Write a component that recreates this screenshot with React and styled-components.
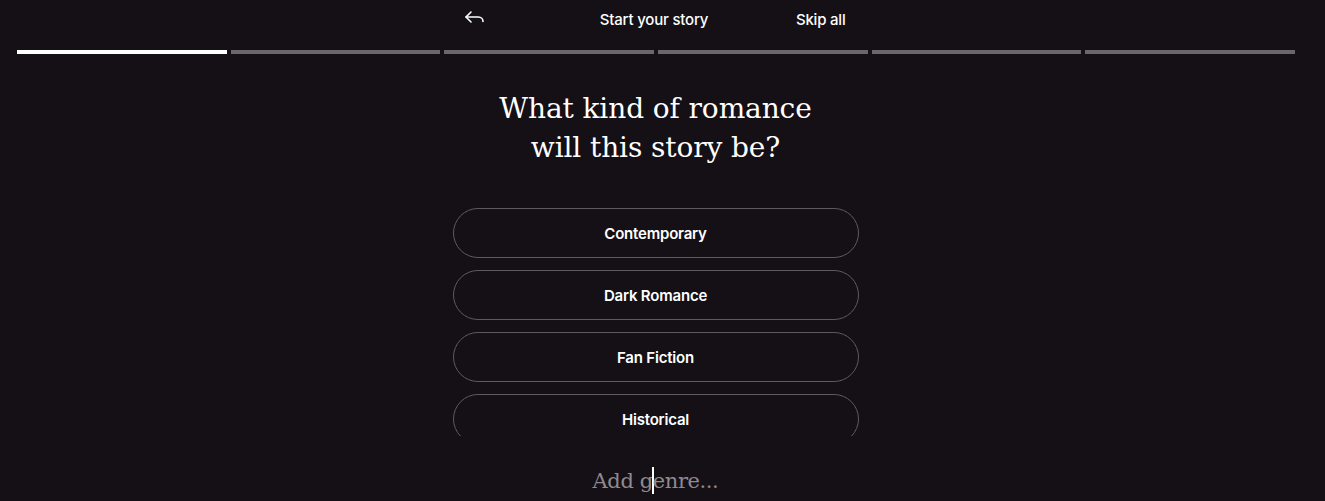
import React from "react";
import styled, { createGlobalStyle } from "styled-components";

const GlobalStyle = createGlobalStyle`
  html, body {
    margin: 0;
    padding: 0;
    background: #141016;
  }
`;

const Page = styled.div`
  height: 501px;
  box-sizing: border-box;
  padding-right: 14px;
  background: #141016;
  color: #fff;
  font-family: Inter, "Noto Sans", sans-serif;
  display: flex;
  flex-direction: column;
  align-items: center;
  overflow: hidden;
`;

const TopBar = styled.header`
  width: 406px;
  height: 38px;
  box-sizing: border-box;
  padding: 0 13px 0 10px;
  display: grid;
  grid-template-columns: 1fr auto 1fr;
  align-items: center;
`;

const BackButton = styled.button`
  justify-self: start;
  background: none;
  border: 0;
  padding: 0;
  color: #fff;
  display: flex;
  cursor: pointer;
`;

const TopTitle = styled.span`
  font-size: 15px;
  font-weight: 500;
  letter-spacing: -0.2px;
`;

const SkipLink = styled.span`
  justify-self: end;
  font-size: 15px;
  font-weight: 500;
  letter-spacing: -0.2px;
`;

const Progress = styled.div`
  align-self: stretch;
  margin: 12px 16px 0 17px;
  display: flex;
  gap: 4px;
`;

const Segment = styled.div`
  flex: 1;
  height: 4px;
  background: ${(p) => (p.$done ? "#ffffff" : "#6a676c")};
`;

const Question = styled.h1`
  margin: 35px 0 0;
  font-family: "DejaVu Serif", serif;
  font-weight: 400;
  font-size: 28px;
  line-height: 39px;
  letter-spacing: -0.1px;
  text-align: center;
`;

const Options = styled.div`
  margin-top: 41px;
  width: 406px;
  height: 228px;
  overflow: hidden;
  display: flex;
  flex-direction: column;
  gap: 12px;
`;

const Option = styled.button`
  flex: none;
  height: 50px;
  border-radius: 25px;
  border: 1px solid #5e5a62;
  background: transparent;
  color: #fff;
  font-family: Inter, "Noto Sans", sans-serif;
  font-size: 15px;
  font-weight: 600;
  letter-spacing: -0.2px;
  cursor: pointer;
`;

const GenreInput = styled.div`
  margin-top: 31px;
  font-family: "DejaVu Serif", serif;
  font-size: 21px;
  letter-spacing: -0.4px;
  color: #8e8a90;
  line-height: 26px;
`;

const Caret = styled.span`
  display: inline-block;
  width: 2px;
  height: 27px;
  margin: 0 -1px;
  vertical-align: -6px;
  background: #fff;
`;

const BackArrow = () => (
  <svg width="24" height="24" viewBox="0 0 24 24" fill="none" stroke="currentColor" strokeWidth="1.6" strokeLinecap="round" strokeLinejoin="round">
    <path d="M8 5 3 10l5 5" />
    <path d="M3 10h12.5a4.5 4.5 0 0 1 4.5 4.5" />
  </svg>
);

const genres = ["Contemporary", "Dark Romance", "Fan Fiction", "Historical", "Paranormal"];

export default function App() {
  return (
    <>
      <GlobalStyle />
      <Page>
        <TopBar>
          <BackButton aria-label="Back">
            <BackArrow />
          </BackButton>
          <TopTitle>Start your story</TopTitle>
          <SkipLink>Skip all</SkipLink>
        </TopBar>
        <Progress>
          {[0, 1, 2, 3, 4, 5].map((i) => (
            <Segment key={i} $done={i === 0} />
          ))}
        </Progress>
        <Question>
          What kind of romance
          <br />
          will this story be?
        </Question>
        <Options>
          {genres.map((g) => (
            <Option key={g}>{g}</Option>
          ))}
        </Options>
        <GenreInput>
          Add g<Caret />enre...
        </GenreInput>
      </Page>
    </>
  );
}
